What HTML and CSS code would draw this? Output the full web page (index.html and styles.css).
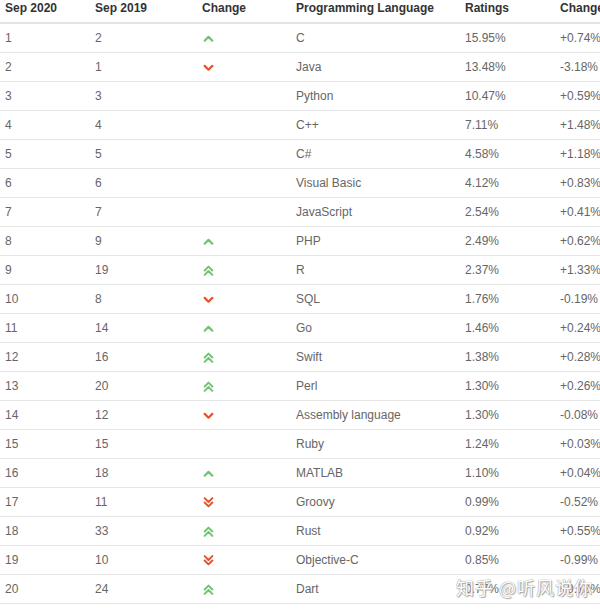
FILE: index.html
```html
<!DOCTYPE html>
<html>
<head>
<meta charset="utf-8">
<link rel="stylesheet" href="styles.css">
</head>
<body>
<svg width="0" height="0" class="defs">
  <defs>
    <symbol id="up" viewBox="0 0 10 10"><polyline points="1.5,7 5,3.5 8.5,7" fill="none" stroke-width="2" stroke-linecap="round" stroke-linejoin="round"/></symbol>
    <symbol id="down" viewBox="0 0 10 10"><polyline points="1.5,3.5 5,7 8.5,3.5" fill="none" stroke-width="2" stroke-linecap="round" stroke-linejoin="round"/></symbol>
    <symbol id="up2" viewBox="0 0 10 10"><polyline points="1.5,5 5,1.5 8.5,5" fill="none" stroke-width="1.8" stroke-linecap="round" stroke-linejoin="round"/><polyline points="1.5,9 5,5.5 8.5,9" fill="none" stroke-width="1.8" stroke-linecap="round" stroke-linejoin="round"/></symbol>
    <symbol id="down2" viewBox="0 0 10 10"><polyline points="1.5,1 5,4.5 8.5,1" fill="none" stroke-width="1.8" stroke-linecap="round" stroke-linejoin="round"/><polyline points="1.5,5 5,8.5 8.5,5" fill="none" stroke-width="1.8" stroke-linecap="round" stroke-linejoin="round"/></symbol>
  </defs>
</svg>
<div class="table">
  <div class="row head"><span>Sep 2020</span><span>Sep 2019</span><span>Change</span><span>Programming Language</span><span>Ratings</span><span>Change</span></div>
  <div class="row"><span>1</span><span>2</span><span><svg class="ic g"><use href="#up"/></svg></span><span>C</span><span>15.95%</span><span>+0.74%</span></div>
  <div class="row"><span>2</span><span>1</span><span><svg class="ic r"><use href="#down"/></svg></span><span>Java</span><span>13.48%</span><span>-3.18%</span></div>
  <div class="row"><span>3</span><span>3</span><span></span><span>Python</span><span>10.47%</span><span>+0.59%</span></div>
  <div class="row"><span>4</span><span>4</span><span></span><span>C++</span><span>7.11%</span><span>+1.48%</span></div>
  <div class="row"><span>5</span><span>5</span><span></span><span>C#</span><span>4.58%</span><span>+1.18%</span></div>
  <div class="row"><span>6</span><span>6</span><span></span><span>Visual Basic</span><span>4.12%</span><span>+0.83%</span></div>
  <div class="row"><span>7</span><span>7</span><span></span><span>JavaScript</span><span>2.54%</span><span>+0.41%</span></div>
  <div class="row"><span>8</span><span>9</span><span><svg class="ic g"><use href="#up"/></svg></span><span>PHP</span><span>2.49%</span><span>+0.62%</span></div>
  <div class="row"><span>9</span><span>19</span><span><svg class="ic g"><use href="#up2"/></svg></span><span>R</span><span>2.37%</span><span>+1.33%</span></div>
  <div class="row"><span>10</span><span>8</span><span><svg class="ic r"><use href="#down"/></svg></span><span>SQL</span><span>1.76%</span><span>-0.19%</span></div>
  <div class="row"><span>11</span><span>14</span><span><svg class="ic g"><use href="#up"/></svg></span><span>Go</span><span>1.46%</span><span>+0.24%</span></div>
  <div class="row"><span>12</span><span>16</span><span><svg class="ic g"><use href="#up2"/></svg></span><span>Swift</span><span>1.38%</span><span>+0.28%</span></div>
  <div class="row"><span>13</span><span>20</span><span><svg class="ic g"><use href="#up2"/></svg></span><span>Perl</span><span>1.30%</span><span>+0.26%</span></div>
  <div class="row"><span>14</span><span>12</span><span><svg class="ic r"><use href="#down"/></svg></span><span>Assembly language</span><span>1.30%</span><span>-0.08%</span></div>
  <div class="row"><span>15</span><span>15</span><span></span><span>Ruby</span><span>1.24%</span><span>+0.03%</span></div>
  <div class="row"><span>16</span><span>18</span><span><svg class="ic g"><use href="#up"/></svg></span><span>MATLAB</span><span>1.10%</span><span>+0.04%</span></div>
  <div class="row"><span>17</span><span>11</span><span><svg class="ic r"><use href="#down2"/></svg></span><span>Groovy</span><span>0.99%</span><span>-0.52%</span></div>
  <div class="row"><span>18</span><span>33</span><span><svg class="ic g"><use href="#up2"/></svg></span><span>Rust</span><span>0.92%</span><span>+0.55%</span></div>
  <div class="row"><span>19</span><span>10</span><span><svg class="ic r"><use href="#down2"/></svg></span><span>Objective-C</span><span>0.85%</span><span>-0.99%</span></div>
  <div class="row"><span>20</span><span>24</span><span><svg class="ic g"><use href="#up2"/></svg></span><span>Dart</span><span>0.77%</span><span>+0.13%</span></div>
</div>
<div class="watermark">知乎 @听风说你</div>
</body>
</html>
```
FILE: styles.css
```css
html, body {
  margin: 0;
  padding: 0;
  background: #fff;
  overflow: hidden;
}
body {
  width: 600px;
  height: 609px;
  position: relative;
  font-family: "Liberation Sans", Arial, sans-serif;
  font-size: 12px;
  color: #666;
}
.defs {
  position: absolute;
  width: 0;
  height: 0;
}
.table {
  width: 640px;
}
.row {
  display: grid;
  grid-template-columns: 90px 107px 94px 169px 95px 85px;
  height: 29px;
  align-items: center;
  border-bottom: 1px solid #e6e6e6;
  box-sizing: border-box;
  white-space: nowrap;
}
.row span {
  padding-left: 5px;
  display: flex;
  align-items: center;
}
.row.head {
  height: 24px;
  padding-bottom: 6px;
  border-bottom: 2px solid #e4e4e4;
  font-weight: bold;
  color: #333;
}
.ic {
  width: 11px;
  height: 11px;
  margin-left: 1px;
}
.ic.g {
  stroke: #74c374;
}
.ic.r {
  stroke: #e4542c;
}
.watermark {
  position: absolute;
  left: 456px;
  top: 574px;
  font-family: "Noto Sans CJK SC", sans-serif;
  font-size: 18px;
  letter-spacing: 1px;
  color: #fff;
  text-shadow: 0 0 1px #999, 0 0 1px #999, 1px 1px 1px #aaa;
}
```
